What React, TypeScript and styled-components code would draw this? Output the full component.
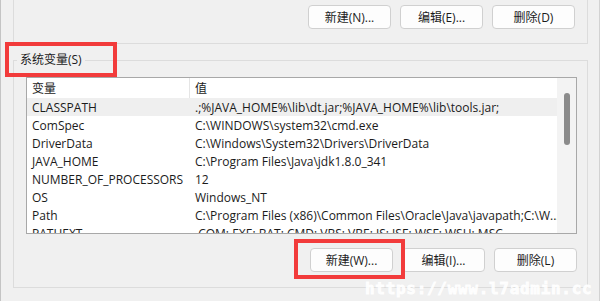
import styled, { createGlobalStyle } from 'styled-components'

/*
 * Data.
 */

const variables = [
  { name: 'CLASSPATH', value: '.;%JAVA_HOME%\\lib\\dt.jar;%JAVA_HOME%\\lib\\tools.jar;', selected: true },
  { name: 'ComSpec', value: 'C:\\WINDOWS\\system32\\cmd.exe' },
  { name: 'DriverData', value: 'C:\\Windows\\System32\\Drivers\\DriverData' },
  { name: 'JAVA_HOME', value: 'C:\\Program Files\\Java\\jdk1.8.0_341' },
  { name: 'NUMBER_OF_PROCESSORS', value: '12' },
  { name: 'OS', value: 'Windows_NT' },
  { name: 'Path', value: 'C:\\Program Files (x86)\\Common Files\\Oracle\\Java\\javapath;C:\\W...' },
  { name: 'PATHEXT', value: '.COM;.EXE;.BAT;.CMD;.VBS;.VBE;.JS;.JSE;.WSF;.WSH;.MSC' },
]

/*
 * Styles.
 */

const GlobalStyle = createGlobalStyle`
  html, body {
    margin: 0;
    padding: 0;
    background: #f0f0f0;
  }
  body {
    font-family: "Open Sans", "Noto Sans CJK SC", sans-serif;
    font-size: 12px;
    color: #1b1b1b;
  }
`

const Page = styled.div`
  position: relative;
  width: 600px;
  height: 301px;
  overflow: hidden;
  box-sizing: border-box;
  padding-left: 13px;
  border-left: 1px solid #c4c4c4;
  border-right: 1px solid #d2d2d2;
  background: #f0f0f0;
`

const UserGroup = styled.div`
  width: 575px;
  height: 44px;
  box-sizing: border-box;
  margin-left: -1px;
  border: 1px solid #dcdcdc;
  border-top: none;
  padding: 5px 12px 0 0;
`

const ButtonRow = styled.div<{ $top?: number }>`
  display: flex;
  justify-content: flex-end;
  gap: 9px;
  margin-top: ${({ $top }) => $top ?? 0}px;
`

const Button = styled.button`
  width: 83px;
  height: 24px;
  box-sizing: border-box;
  background: #fdfdfd;
  border: 1px solid #d0d0d0;
  border-radius: 4px;
  font: inherit;
  color: #1b1b1b;
  padding: 0;
`

const Group = styled.fieldset`
  width: 575px;
  box-sizing: border-box;
  margin: 8px 0 0 -1px;
  border: 1px solid #dcdcdc;
  padding: 9px 10px 15px 12px;
`

const Legend = styled.legend`
  position: relative;
  margin-left: -9px;
  padding: 0 3px;
  line-height: 16px;
`

const Marked = styled.span<{ $t: number; $r: number; $b: number; $l: number }>`
  position: relative;
  display: inline-block;

  &::after {
    content: '';
    position: absolute;
    top: ${({ $t }) => -$t}px;
    right: ${({ $r }) => -$r}px;
    bottom: ${({ $b }) => -$b}px;
    left: ${({ $l }) => -$l}px;
    border: 4px solid #f23b3b;
    pointer-events: none;
  }
`

const ListBox = styled.div`
  height: 157px;
  box-sizing: border-box;
  border: 1px solid #a8a8a8;
  background: #fff;
  display: flex;
  overflow: hidden;
`

const Rows = styled.div`
  flex: 1;
  min-width: 0;
`

const Row = styled.div<{ $selected?: boolean; $header?: boolean }>`
  display: grid;
  grid-template-columns: 163px 1fr;
  height: ${({ $header }) => ($header ? 20 : 18)}px;
  align-items: center;
  background: ${({ $selected }) => ($selected ? '#efefef' : 'transparent')};
  white-space: nowrap;
`

const Cell = styled.div<{ $divider?: boolean }>`
  padding-left: 5px;
  overflow: hidden;
  height: 100%;
  display: flex;
  align-items: center;
  border-right: ${({ $divider }) => ($divider ? '1px solid #e5e5e5' : 'none')};
`

const ScrollTrack = styled.div`
  width: 19px;
  background: #f3f3f3;
  padding: 15px 0 0 7px;
  box-sizing: border-box;
`

const ScrollThumb = styled.div`
  width: 6px;
  height: 52px;
  border-radius: 3px;
  background: #8b8b8b;
`

const Watermark = styled.div`
  position: absolute;
  left: 364px;
  top: 279px;
  font-family: "DejaVu Sans Mono", monospace;
  font-weight: bold;
  font-size: 16px;
  letter-spacing: 0.7px;
  color: rgba(255, 255, 255, 0.92);
  -webkit-text-stroke: 0.8px rgba(255, 255, 255, 0.92);
  white-space: nowrap;
`

/*
 * Component.
 */

export default function App() {
  return (
    <>
      <GlobalStyle />
      <Page>
        <UserGroup>
          <ButtonRow>
            <Button>新建(N)...</Button>
            <Button>编辑(E)...</Button>
            <Button>删除(D)</Button>
          </ButtonRow>
        </UserGroup>

        <Group>
          <Legend>
            <Marked $t={10} $r={35} $b={9} $l={15}>系统变量(S)</Marked>
          </Legend>
          <ListBox>
            <Rows>
              <Row $header>
                <Cell $divider>变量</Cell>
                <Cell>值</Cell>
              </Row>
              {variables.map((v) => (
                <Row key={v.name} $selected={v.selected}>
                  <Cell>{v.name}</Cell>
                  <Cell>{v.value}</Cell>
                </Row>
              ))}
            </Rows>
            <ScrollTrack>
              <ScrollThumb />
            </ScrollTrack>
          </ListBox>
          <ButtonRow $top={14}>
            <Marked $t={9} $r={12} $b={7} $l={16}>
              <Button>新建(W)...</Button>
            </Marked>
            <Button>编辑(I)...</Button>
            <Button>删除(L)</Button>
          </ButtonRow>
        </Group>

        <Watermark>https://www.l7admin.cc</Watermark>
      </Page>
    </>
  )
}
